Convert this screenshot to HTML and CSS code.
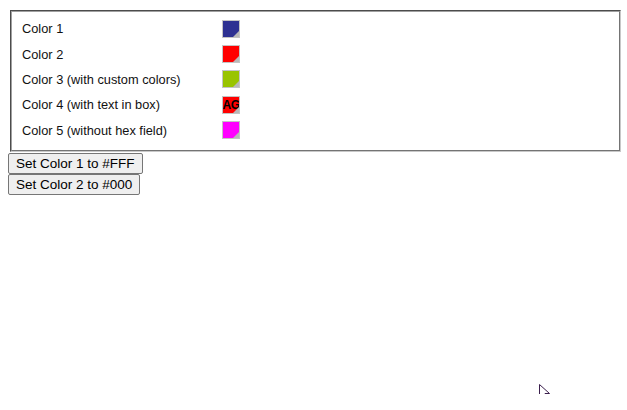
FILE: index.html
```html
<!DOCTYPE html>
<html>
<head>
<meta charset="utf-8">
<link rel="stylesheet" href="styles.css">
</head>
<body>
<div class="panel">
  <div class="row"><span class="label">Color 1</span><span class="swatch" style="background:#2e3192"></span></div>
  <div class="row"><span class="label">Color 2</span><span class="swatch" style="background:#ff0000"></span></div>
  <div class="row"><span class="label">Color 3 (with custom colors)</span><span class="swatch" style="background:#99c400"></span></div>
  <div class="row"><span class="label">Color 4 (with text in box)</span><span class="swatch swatch-text" style="background:#ff0000">AG</span></div>
  <div class="row"><span class="label">Color 5 (without hex field)</span><span class="swatch" style="background:#ff00ff"></span></div>
</div>
<div class="buttons">
  <button class="btn">Set Color 1 to #FFF</button>
  <button class="btn">Set Color 2 to #000</button>
</div>
<svg class="cursor" width="14" height="20" viewBox="0 0 14 20"><path d="M1.5 1.5 L1.5 14.5 L4.5 11.5 L7 17.5 L9.5 16.5 L7 10.5 L11.5 10.5 Z" fill="#ffffff" stroke="#3b1f4d" stroke-width="1" stroke-linejoin="miter"/></svg>
</body>
</html>
```
FILE: styles.css
```css
html, body {
  margin: 0;
  padding: 0;
  background: #fff;
}
body {
  padding: 8px;
  font-family: "Liberation Sans", Arial, sans-serif;
  font-size: 12.8px;
  color: #111;
  position: relative;
  height: 394px;
  box-sizing: border-box;
}
.panel {
  margin: 2px -2px 0 2px;
  border: 2px groove #c8c8c8;
  border-top-color: #a0a0a0;
  border-left-color: #a0a0a0;
  padding: 4px 10px 7px 10px;
}
.row {
  display: flex;
  align-items: center;
  height: 25.4px;
}
.label {
  width: 200px;
}
.swatch {
  width: 16px;
  height: 16px;
  border: 1px solid #c4c4c4;
  position: relative;
  display: flex;
  align-items: center;
  justify-content: center;
  overflow: hidden;
}
.swatch::after {
  content: "";
  position: absolute;
  right: 0;
  bottom: 0;
  width: 0;
  height: 0;
  border-style: solid;
  border-width: 0 0 6px 6px;
  border-color: transparent transparent #b8b8b8 transparent;
}
.swatch-text {
  font-size: 12px;
  font-weight: bold;
  color: #000;
  letter-spacing: -0.5px;
}
.buttons {
  display: flex;
  flex-direction: column;
  align-items: flex-start;
  gap: 0;
  margin-top: 1px;
}
.btn {
  font-family: "Liberation Sans", Arial, sans-serif;
  font-size: 13.5px;
  color: #000;
  background: #efefef;
  border: 1px solid #767676;
  border-radius: 2px;
  padding: 1px 7px;
  margin: 0;
  height: 21px;
}
.cursor {
  position: absolute;
  left: 538px;
  top: 383px;
}
```
